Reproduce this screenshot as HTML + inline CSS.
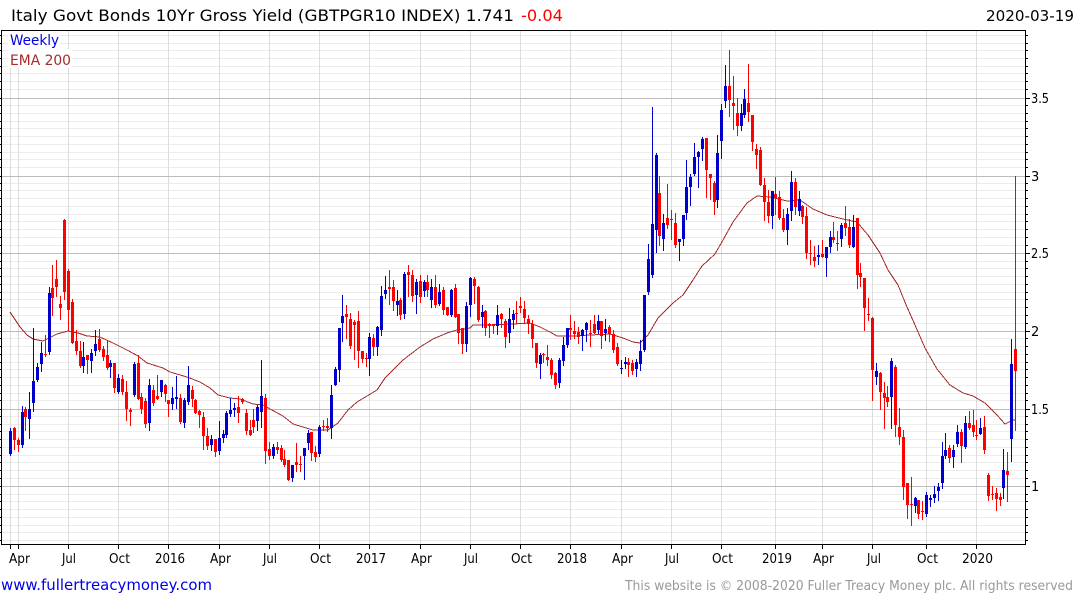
<!DOCTYPE html>
<html lang="en"><head><meta charset="utf-8"><title>Italy Govt Bonds 10Yr Gross Yield</title>
<style>html,body{margin:0;padding:0;background:#fff;width:1075px;height:600px;overflow:hidden}svg{display:block}text{font-family:"DejaVu Sans","Liberation Sans",sans-serif}</style></head><body>
<svg xmlns="http://www.w3.org/2000/svg" width="1075" height="600" viewBox="0 0 1075 600">
<g fill="none" shape-rendering="crispEdges">
<path stroke="#ececec" d="M1 35.5H1025M1 43.5H1025M1 50.5H1025M1 58.5H1025M1 66.5H1025M1 73.5H1025M1 81.5H1025M1 89.5H1025M1 105.5H1025M1 113.5H1025M1 121.5H1025M1 128.5H1025M1 136.5H1025M1 144.5H1025M1 152.5H1025M1 159.5H1025M1 167.5H1025M1 183.5H1025M1 190.5H1025M1 198.5H1025M1 206.5H1025M1 214.5H1025M1 221.5H1025M1 229.5H1025M1 237.5H1025M1 245.5H1025M1 261.5H1025M1 268.5H1025M1 276.5H1025M1 284.5H1025M1 292.5H1025M1 299.5H1025M1 307.5H1025M1 315.5H1025M1 323.5H1025M1 338.5H1025M1 346.5H1025M1 354.5H1025M1 362.5H1025M1 369.5H1025M1 377.5H1025M1 385.5H1025M1 393.5H1025M1 400.5H1025M1 416.5H1025M1 424.5H1025M1 431.5H1025M1 439.5H1025M1 447.5H1025M1 455.5H1025M1 462.5H1025M1 470.5H1025M1 478.5H1025M1 494.5H1025M1 501.5H1025M1 509.5H1025M1 517.5H1025M1 525.5H1025M1 532.5H1025M1 540.5H1025"/>
<path stroke="#dcdcdc" d="M10.5 30V544M18.5 30V544M68.5 30V544M118.5 30V544M168.5 30V544M219.5 30V544M269.5 30V544M319.5 30V544M369.5 30V544M420.5 30V544M470.5 30V544M520.5 30V544M570.5 30V544M621.5 30V544M671.5 30V544M721.5 30V544M775.5 30V544M822.5 30V544M872.5 30V544M926.5 30V544M976.5 30V544"/>
<path stroke="#bdbdbd" d="M1 98.5H1025M1 176.5H1025M1 253.5H1025M1 331.5H1025M1 409.5H1025M1 486.5H1025"/>
<path stroke="#a52a2a" d="M10 312L20 327L27 335L33 339L43 341L49 338L57 334L68 331L78 333L87 336L100 337L113 343L127 350L138 356L147 363L163 368L170 372L187 377L200 382L210 388L218 395L230 398L240 399L253 404L263 405L270 409L283 416L293 424L313 430L328 430L338 423L348 410L357 402L377 390L385 378L403 360L420 347L433 339L447 333L457 330L470 328L473 325L487 325L513 324L530 323L540 327L550 332L557 336L573 336L590 335L610 334L623 338L633 342L640 343L648 335L658 318L673 303L683 295L693 280L702 266L715 254L723 240L733 222L747 203L757 196L770 197L787 201L800 200L813 209L827 215L843 219L857 222L868 235L880 253L888 270L898 285L907 307L915 325L925 348L937 369L950 385L963 393L973 396L985 403L997 415L1005 424L1013 420L1016 420"/>
<path stroke="#0000cd" d="M10.5 428V456M22.5 406V448M29.5 392V439M33.5 328V412M37.5 363V382M41.5 342V372M49.5 287V355M83.5 342V373M91.5 349V373M95.5 330V356M110.5 360V378M118.5 374V394M134.5 362V397M149.5 379V431M161.5 380V397M172.5 387V410M176.5 376V409M184.5 398V428M188.5 366V405M211.5 435V451M219.5 421V455M223.5 430V443M226.5 411V438M230.5 398V417M234.5 403V417M257.5 405V431M261.5 360V428M273.5 444V459M292.5 465V482M304.5 448V480M308.5 430V450M319.5 425V457M331.5 385V439M335.5 367V386M339.5 328V382M342.5 295V342M369.5 333V376M377.5 326V356M381.5 286V336M385.5 276V299M397.5 290V316M404.5 272V319M416.5 279V314M424.5 280V297M431.5 279V308M439.5 284V306M451.5 289V317M466.5 302V352M470.5 277V317M482.5 305V328M497.5 305V335M509.5 308V343M513.5 310V329M540.5 353V379M559.5 358V388M563.5 337V366M567.5 328V348M582.5 329V351M586.5 322V342M598.5 315V334M605.5 319V341M621.5 360V374M625.5 357V369M636.5 359V377M640.5 340V371M644.5 295V352M648.5 244V295M652.5 107V278M656.5 153V253M663.5 214V251M679.5 239V261M683.5 215V246M686.5 160V220M690.5 174V206M694.5 143V176M698.5 151V188M702.5 137V161M717.5 135V208M721.5 104V159M725.5 65V108M741.5 104V131M744.5 89V118M772.5 191V229M787.5 208V245M791.5 171V221M799.5 191V216M818.5 245V265M826.5 247V277M830.5 231V253M841.5 223V247M853.5 215V248M876.5 363V385M891.5 358V429M915.5 497V513M926.5 492V517M930.5 495V507M934.5 486V503M938.5 483V501M942.5 442V489M945.5 433V459M953.5 445V468M957.5 425V447M965.5 416V449M980.5 418V435M1003.5 449V499M1011.5 339V462"/>
<path stroke="#0000cd" stroke-width="3" d="M10.5 431V454M22.5 412V445M29.5 409V419M33.5 381V403M37.5 367V380M41.5 353V364M49.5 293V352M83.5 357V366M91.5 353V361M95.5 344V351M110.5 363V367M118.5 378V392M134.5 364V395M149.5 385V423M161.5 380V392M172.5 398V404M176.5 397V399M184.5 400V423M188.5 385V402M211.5 439V445M219.5 438V451M223.5 434V438M226.5 413V435M230.5 410V414M234.5 408V410M257.5 407V421M261.5 396V412M273.5 447V456M292.5 465V478M304.5 448V456M308.5 433V443M319.5 427V454M331.5 395V428M335.5 369V385M339.5 328V370M342.5 316V323M369.5 337V359M377.5 327V347M381.5 296V330M385.5 290V294M397.5 301V305M404.5 274V314M416.5 282V295M424.5 282V291M431.5 287V300M439.5 292V304M451.5 290V315M466.5 306V344M470.5 278V305M482.5 312V317M497.5 315V326M509.5 319V333M513.5 314V320M540.5 355V364M559.5 360V383M563.5 345V361M567.5 328V345M582.5 330V336M586.5 323V330M598.5 321V330M605.5 329V333M621.5 368V369M625.5 362V364M636.5 362V369M640.5 351V364M644.5 295V350M648.5 259V292M652.5 224V275M656.5 155V230M663.5 223V239M679.5 239V242M683.5 215V239M686.5 187V213M690.5 177V187M694.5 157V174M698.5 152V157M702.5 139V149M717.5 153V200M721.5 110V141M725.5 86V101M741.5 113V126M744.5 99V115M772.5 191V216M787.5 214V230M791.5 182V211M799.5 199V211M818.5 255V257M826.5 247V258M830.5 237V247M841.5 225V239M853.5 227V247M876.5 371V377M891.5 361V397M915.5 498V506M926.5 495V514M930.5 498V500M934.5 494V498M938.5 487V491M942.5 456V483M945.5 450V456M953.5 450V457M957.5 432V444M965.5 423V447M980.5 428V434M1003.5 470V488M1011.5 364V439"/>
<path stroke="#ff0000" d="M14.5 427V450M18.5 438V452M25.5 407V431M45.5 335V357M52.5 265V316M56.5 260V297M60.5 296V320M64.5 219V300M68.5 269V331M72.5 299V344M76.5 330V355M80.5 341V368M87.5 355V374M99.5 329V352M103.5 346V361M107.5 340V370M114.5 363V393M122.5 375V395M126.5 381V421M130.5 408V426M138.5 355V400M141.5 393V414M145.5 398V428M153.5 385V406M157.5 375V400M165.5 384V402M168.5 400V417M180.5 394V424M192.5 386V407M195.5 399V414M199.5 410V428M203.5 412V450M207.5 428V450M215.5 439V457M238.5 396V423M242.5 398V404M246.5 409V435M250.5 420V436M253.5 409V433M265.5 394V464M269.5 442V460M277.5 442V454M281.5 445V462M284.5 450V467M288.5 460V481M296.5 443V472M300.5 456V472M311.5 432V461M315.5 446V462M323.5 420V431M327.5 418V432M346.5 305V339M350.5 313V349M354.5 320V360M358.5 311V368M362.5 351V363M366.5 353V367M373.5 334V356M389.5 270V305M393.5 280V311M400.5 298V320M408.5 265V297M412.5 270V302M420.5 275V303M427.5 275V297M435.5 275V308M443.5 287V315M447.5 307V316M455.5 284V318M458.5 314V344M462.5 328V354M474.5 277V304M478.5 286V322M485.5 310V336M489.5 323V338M493.5 324V334M501.5 313V328M505.5 319V348M516.5 301V324M520.5 297V313M524.5 301V324M528.5 315V334M532.5 320V348M536.5 343V368M543.5 353V363M547.5 345V366M551.5 358V379M555.5 372V389M570.5 315V340M574.5 321V339M578.5 327V344M590.5 320V347M594.5 315V334M601.5 321V349M609.5 325V342M613.5 330V353M617.5 343V366M628.5 358V377M632.5 360V375M659.5 176V246M667.5 184V229M671.5 210V240M675.5 213V248M706.5 138V198M710.5 174V200M714.5 181V215M729.5 50V117M733.5 76V130M737.5 98V136M748.5 64V122M752.5 115V151M756.5 144V169M760.5 147V186M764.5 178V221M768.5 190V223M775.5 177V215M779.5 191V220M783.5 209V232M795.5 178V215M802.5 205V224M806.5 207V259M810.5 240V265M814.5 246V267M822.5 240V258M833.5 222V243M837.5 231V251M845.5 206V236M849.5 219V248M857.5 218V289M860.5 263V287M864.5 278V331M868.5 298V321M872.5 317V401M880.5 372V410M884.5 382V429M887.5 386V407M895.5 365V437M899.5 408V445M903.5 430V500M907.5 483V519M911.5 477V526M918.5 500V519M922.5 501V520M949.5 445V463M961.5 429V463M969.5 411V430M973.5 410V437M976.5 420V440M984.5 416V454M988.5 473V501M992.5 486V500M996.5 488V511M1000.5 493V506M1007.5 452V502M1015.5 176V431"/>
<path stroke="#ff0000" stroke-width="3" d="M14.5 428V440M18.5 440V445M25.5 409V417M45.5 354V355M52.5 288V298M56.5 279V287M60.5 304V308M64.5 220V292M68.5 271V310M72.5 302V343M76.5 341V351M80.5 351V366M87.5 355V360M99.5 339V350M103.5 349V357M107.5 355V368M114.5 363V388M122.5 379V392M126.5 392V409M130.5 410V412M138.5 363V399M141.5 397V409M145.5 401V424M153.5 390V403M157.5 396V399M165.5 385V394M168.5 400V404M180.5 398V422M192.5 390V399M195.5 400V413M199.5 411V415M203.5 417V436M207.5 436V446M215.5 439V452M238.5 407V413M242.5 399V402M246.5 413V431M250.5 430V435M253.5 420V427M265.5 398V451M269.5 449V456M277.5 447V450M281.5 448V460M284.5 459V465M288.5 460V480M296.5 462V465M300.5 464V465M311.5 432V453M315.5 452V457M323.5 426V427M327.5 426V428M346.5 314V317M350.5 319V346M354.5 322V325M358.5 321V351M362.5 351V359M366.5 358V359M373.5 338V347M389.5 287V289M393.5 287V301M400.5 300V315M408.5 272V275M412.5 275V296M420.5 281V297M427.5 282V290M435.5 287V305M443.5 290V310M447.5 307V315M455.5 288V317M458.5 314V333M462.5 328V344M474.5 279V286M478.5 287V320M485.5 311V328M489.5 324V326M493.5 324V326M501.5 314V319M505.5 321V337M516.5 313V314M520.5 306V308M524.5 309V318M528.5 319V324M532.5 324V339M536.5 343V363M543.5 354V355M547.5 357V360M551.5 360V375M555.5 373V385M570.5 328V330M574.5 331V334M578.5 332V337M590.5 333V334M594.5 324V333M601.5 321V336M609.5 327V334M613.5 334V350M617.5 347V364M628.5 362V365M632.5 363V371M659.5 193V236M667.5 218V225M671.5 219V220M675.5 223V245M706.5 138V170M710.5 174V178M714.5 183V202M729.5 86V100M733.5 103V106M737.5 113V126M748.5 103V112M752.5 115V142M756.5 149V155M760.5 150V185M764.5 185V202M768.5 202V216M775.5 194V198M779.5 197V218M783.5 218V230M795.5 182V207M802.5 206V217M806.5 216V253M810.5 253V254M814.5 257V261M822.5 254V257M833.5 237V240M837.5 243V244M845.5 223V228M849.5 227V245M857.5 218V275M860.5 273V277M864.5 278V308M868.5 314V315M872.5 318V370M880.5 373V392M884.5 393V398M887.5 397V402M895.5 367V425M899.5 427V437M903.5 437V487M907.5 483V505M911.5 504V505M918.5 500V514M922.5 511V512M949.5 448V458M961.5 432V446M969.5 423V428M973.5 425V432M976.5 435V436M984.5 427V450M988.5 475V496M992.5 494V495M996.5 493V499M1000.5 497V500M1007.5 471V475M1015.5 349V371"/>
<rect x="8" y="31" width="52" height="19" fill="#fff" stroke="none"/>
<rect x="8" y="49" width="64" height="19" fill="#fff" stroke="none"/>
<path stroke="#000" d="M1.5 30.5H1025.5V544.5H1.5Z"/>
<path stroke="#000" d="M0 35.5H1M0 43.5H1M0 50.5H1M0 58.5H1M0 66.5H1M0 73.5H1M0 81.5H1M0 89.5H1M0 98.5H1M0 105.5H1M0 113.5H1M0 121.5H1M0 128.5H1M0 136.5H1M0 144.5H1M0 152.5H1M0 159.5H1M0 167.5H1M0 176.5H1M0 183.5H1M0 190.5H1M0 198.5H1M0 206.5H1M0 214.5H1M0 221.5H1M0 229.5H1M0 237.5H1M0 245.5H1M0 253.5H1M0 261.5H1M0 268.5H1M0 276.5H1M0 284.5H1M0 292.5H1M0 299.5H1M0 307.5H1M0 315.5H1M0 323.5H1M0 331.5H1M0 338.5H1M0 346.5H1M0 354.5H1M0 362.5H1M0 369.5H1M0 377.5H1M0 385.5H1M0 393.5H1M0 400.5H1M0 409.5H1M0 416.5H1M0 424.5H1M0 431.5H1M0 439.5H1M0 447.5H1M0 455.5H1M0 462.5H1M0 470.5H1M0 478.5H1M0 486.5H1M0 494.5H1M0 501.5H1M0 509.5H1M0 517.5H1M0 525.5H1M0 532.5H1M0 540.5H1"/>
<path stroke="#000" d="M1026 35.5H1028M1026 43.5H1028M1026 50.5H1028M1026 58.5H1028M1026 66.5H1028M1026 73.5H1028M1026 81.5H1028M1026 89.5H1028M1026 98.5H1030M1026 105.5H1028M1026 113.5H1028M1026 121.5H1028M1026 128.5H1028M1026 136.5H1028M1026 144.5H1028M1026 152.5H1028M1026 159.5H1028M1026 167.5H1028M1026 176.5H1030M1026 183.5H1028M1026 190.5H1028M1026 198.5H1028M1026 206.5H1028M1026 214.5H1028M1026 221.5H1028M1026 229.5H1028M1026 237.5H1028M1026 245.5H1028M1026 253.5H1030M1026 261.5H1028M1026 268.5H1028M1026 276.5H1028M1026 284.5H1028M1026 292.5H1028M1026 299.5H1028M1026 307.5H1028M1026 315.5H1028M1026 323.5H1028M1026 331.5H1030M1026 338.5H1028M1026 346.5H1028M1026 354.5H1028M1026 362.5H1028M1026 369.5H1028M1026 377.5H1028M1026 385.5H1028M1026 393.5H1028M1026 400.5H1028M1026 409.5H1030M1026 416.5H1028M1026 424.5H1028M1026 431.5H1028M1026 439.5H1028M1026 447.5H1028M1026 455.5H1028M1026 462.5H1028M1026 470.5H1028M1026 478.5H1028M1026 486.5H1030M1026 494.5H1028M1026 501.5H1028M1026 509.5H1028M1026 517.5H1028M1026 525.5H1028M1026 532.5H1028M1026 540.5H1028"/>
<path stroke="#000" d="M10.5 545V549M18.5 545V549M68.5 545V549M118.5 545V549M168.5 545V549M219.5 545V549M269.5 545V549M319.5 545V549M369.5 545V549M420.5 545V549M470.5 545V549M520.5 545V549M570.5 545V549M621.5 545V549M671.5 545V549M721.5 545V549M775.5 545V549M822.5 545V549M872.5 545V549M926.5 545V549M976.5 545V549"/>
</g>
<g lengthAdjust="spacingAndGlyphs">
<text x="11" y="21" font-size="16" fill="#000" textLength="503" lengthAdjust="spacingAndGlyphs">Italy Govt Bonds 10Yr Gross Yield (GBTPGR10 INDEX) 1.741</text>
<text x="521" y="21" font-size="16" fill="#ff0000" textLength="42" lengthAdjust="spacingAndGlyphs">-0.04</text>
<text x="986" y="21" font-size="15" fill="#000" textLength="88" lengthAdjust="spacingAndGlyphs">2020-03-19</text>
<text x="10" y="45" font-size="14" fill="#0000e0" textLength="49" lengthAdjust="spacingAndGlyphs">Weekly</text>
<text x="10" y="65" font-size="14" fill="#a52a2a" textLength="61" lengthAdjust="spacingAndGlyphs">EMA 200</text>
</g>
<g font-size="13" fill="#000">
<text x="1031" y="103" textLength="18" lengthAdjust="spacingAndGlyphs">3.5</text>
<text x="1031" y="181">3</text>
<text x="1031" y="258" textLength="18" lengthAdjust="spacingAndGlyphs">2.5</text>
<text x="1031" y="336">2</text>
<text x="1031" y="414" textLength="18" lengthAdjust="spacingAndGlyphs">1.5</text>
<text x="1031" y="491">1</text>
<text x="9" y="563" textLength="21" lengthAdjust="spacingAndGlyphs">Apr</text>
<text x="62" y="563" textLength="14" lengthAdjust="spacingAndGlyphs">Jul</text>
<text x="109" y="563" textLength="21" lengthAdjust="spacingAndGlyphs">Oct</text>
<text x="155" y="563" textLength="30" lengthAdjust="spacingAndGlyphs">2016</text>
<text x="210" y="563" textLength="21" lengthAdjust="spacingAndGlyphs">Apr</text>
<text x="263" y="563" textLength="14" lengthAdjust="spacingAndGlyphs">Jul</text>
<text x="310" y="563" textLength="21" lengthAdjust="spacingAndGlyphs">Oct</text>
<text x="356" y="563" textLength="30" lengthAdjust="spacingAndGlyphs">2017</text>
<text x="411" y="563" textLength="21" lengthAdjust="spacingAndGlyphs">Apr</text>
<text x="464" y="563" textLength="14" lengthAdjust="spacingAndGlyphs">Jul</text>
<text x="511" y="563" textLength="21" lengthAdjust="spacingAndGlyphs">Oct</text>
<text x="557" y="563" textLength="30" lengthAdjust="spacingAndGlyphs">2018</text>
<text x="612" y="563" textLength="21" lengthAdjust="spacingAndGlyphs">Apr</text>
<text x="665" y="563" textLength="14" lengthAdjust="spacingAndGlyphs">Jul</text>
<text x="712" y="563" textLength="21" lengthAdjust="spacingAndGlyphs">Oct</text>
<text x="762" y="563" textLength="30" lengthAdjust="spacingAndGlyphs">2019</text>
<text x="813" y="563" textLength="21" lengthAdjust="spacingAndGlyphs">Apr</text>
<text x="867" y="563" textLength="14" lengthAdjust="spacingAndGlyphs">Jul</text>
<text x="917" y="563" textLength="21" lengthAdjust="spacingAndGlyphs">Oct</text>
<text x="962" y="563" textLength="31" lengthAdjust="spacingAndGlyphs">2020</text>
</g>
<text x="1" y="590" font-size="15" fill="#0000e6" textLength="211" lengthAdjust="spacingAndGlyphs">www.fullertreacymoney.com</text>
<text x="625" y="590" font-size="13" fill="#999" textLength="448" lengthAdjust="spacingAndGlyphs">This website is © 2008-2020 Fuller Treacy Money plc. All rights reserved</text>
</svg>
</body></html>
